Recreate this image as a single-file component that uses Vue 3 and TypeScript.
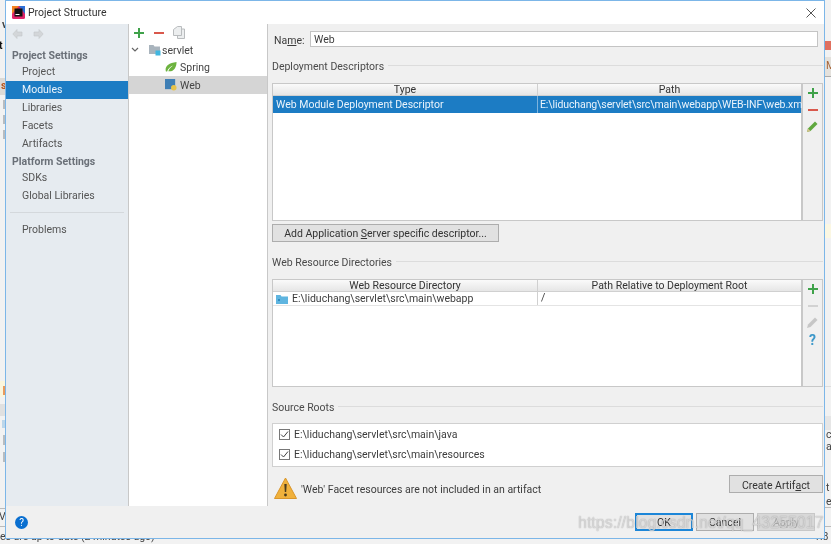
<script setup lang="ts">
const navTop = ['Project', 'Modules', 'Libraries', 'Facets', 'Artifacts']
const navBottom = ['SDKs', 'Global Libraries']
</script>

<template>
  <div class="desk">
    <div class="behind">
      <div class="bb b-tan-l"></div>
      <div class="bb b-sq s1"></div><div class="bb b-sq s2"></div><div class="bb b-sq s3"></div>
      <div class="bb b-yel"></div><div class="bb b-org"></div>
      <div class="bb b-gr1"></div><div class="bb b-blu"></div>
      <div class="bb b-sq s4"></div><div class="bb b-sq s5"></div>
      <div class="bb ln-l1"></div><div class="bb ln-l2"></div>
      <div class="bb redbar"></div>
      <div class="bb b-tan-r"></div>
      <div class="bb b-yel-r"></div>
      <div class="bb b-gr-r"></div>
      <div class="bb ln-r1"></div><div class="bb ln-r2"></div><div class="bb ln-r3"></div>
      <span class="frag f1">v</span><span class="frag f2">t</span><span class="frag f3">s</span>
      <span class="frag f4">V</span>
      <span class="frag status">es are up-to-date (2 minutes ago)</span>
      <span class="frag pos">1:8</span>
      <span class="frag rc r0">M</span>
      <span class="frag rc c1">c</span><span class="frag rc c2">a</span><span class="frag rc c3">t</span><span class="frag rc c4">e</span>
    </div>

    <div class="dialog">
      <header class="title">
        <svg class="appicon" width="13" height="13" viewBox="0 0 13 13">
          <rect width="13" height="13" rx="1.500" fill="#e0246a" />
          <path d="M0 0h7L0 8z" fill="#f58220" />
          <path d="M13 0v8L7 0z" fill="#2d6fd6" />
          <rect x="2.500" y="2.500" width="8" height="8" fill="#111" />
          <rect x="3.500" y="8" width="4" height="1" fill="#fff" />
        </svg>
        <span>Project Structure</span>
        <svg class="close" width="10" height="10" viewBox="0 0 10 10"><path d="M.5.5l9 9M9.500.5l-9 9" stroke="#555" fill="none" /></svg>
      </header>

      <div class="main">
        <aside class="side">
          <div class="arrows">
            <svg width="11" height="10" viewBox="0 0 11 10"><path d="M5 .5L.8 5 5 9.500V7h5V3H5z" fill="#d3d6d9" stroke="#c4c7ca" stroke-width=".6" /></svg>
            <svg width="11" height="10" viewBox="0 0 11 10"><path d="M6 .5L10.200 5 6 9.500V7H1V3h5z" fill="#d3d6d9" stroke="#c4c7ca" stroke-width=".6" /></svg>
          </div>
          <div class="group g1">Project Settings</div>
          <div v-for="n in navTop" :key="n" class="nav" :class="{ on: n === 'Modules' }">{{ n }}</div>
          <div class="group g2">Platform Settings</div>
          <div v-for="n in navBottom" :key="n" class="nav">{{ n }}</div>
          <div class="rule"></div>
          <div class="nav">Problems</div>
        </aside>

        <section class="tree">
          <div class="treebar">
            <svg width="12" height="12" viewBox="0 0 12 12"><path d="M6 1v10M1 6h10" stroke="#3fa24a" stroke-width="2" /></svg>
            <svg width="12" height="12" viewBox="0 0 12 12"><path d="M1 6h10" stroke="#d9584c" stroke-width="2" /></svg>
            <svg width="12" height="13" viewBox="0 0 12 13"><path d="M4.500 .5h4v9h-8V3.500z M8.500 3h3v9.500h-7V9.500" fill="#eceeef" stroke="#b9bcbe" /></svg>
          </div>
          <div class="node root">
            <svg width="8" height="6" viewBox="0 0 8 6"><path d="M1 1l3 3 3-3" stroke="#666" fill="none" stroke-width="1.200" /></svg>
            <svg class="ni" width="12" height="12" viewBox="0 0 12 12"><path d="M0 1h4.500l1 1.500H11V10H0z" fill="#a9b4bd" /><rect x="6.500" y="6.500" width="5" height="5" fill="#40b6e0" /></svg>
            <span>servlet</span>
          </div>
          <div class="node child">
            <svg class="ni" width="12" height="12" viewBox="0 0 13 12"><path d="M1 11C-.5 6 3 1.500 12.500.5 12.500 7 9 11.500 3.500 10.500 5 7 7.500 5.500 9 4.500 6 5.500 3.500 7.500 2.300 11z" fill="#6db33f" /></svg>
            <span>Spring</span>
          </div>
          <div class="node child sel">
            <svg class="ni" width="12" height="12" viewBox="0 0 13 13"><rect width="11" height="11" fill="#3f7fb5" /><circle cx="9.500" cy="9.500" r="3" fill="#e8c34a" /></svg>
            <span>Web</span>
          </div>
        </section>

        <section class="pane">
          <div class="namerow">
            <label>Na<u>m</u>e:</label>
            <div class="input">Web</div>
          </div>

          <div class="legend first"><span>Deployment Descriptors</span><i></i></div>
          <div class="tablewrap t1">
            <div class="tbl">
              <div class="thead"><div class="c-a">Type</div><div class="c-b">Path</div></div>
              <div class="row chosen"><div class="c-a">Web Module Deployment Descriptor</div><div class="c-b">E:\liduchang\servlet\src\main\webapp\WEB-INF\web.xml</div></div>
            </div>
            <div class="tools">
              <svg width="12" height="12" viewBox="0 0 12 12"><path d="M6 1v10M1 6h10" stroke="#3fa24a" stroke-width="2" /></svg>
              <svg width="12" height="12" viewBox="0 0 12 12"><path d="M1 6h10" stroke="#d9584c" stroke-width="2" /></svg>
              <svg width="11" height="11" viewBox="0 0 11 11"><path d="M0 11l1-3.500L8 .5 10.500 3 3.500 10z" fill="#5fa83f" /><path d="M0 11l1-3.500 2.500 2.500z" fill="#d7c08a" /></svg>
            </div>
          </div>
          <div class="addrow"><button class="btn add">Add Application <u>S</u>erver specific descriptor...</button></div>

          <div class="legend second"><span>Web Resource Directories</span><i></i></div>
          <div class="tablewrap t2">
            <div class="tbl">
              <div class="thead"><div class="c-a">Web Resource Directory</div><div class="c-b">Path Relative to Deployment Root</div></div>
              <div class="row plain">
                <div class="c-a">
                  <svg width="12" height="10" viewBox="0 0 12 10"><path d="M0 1h4.500l1 1.500H12V10H0z" fill="#5fb5e0" /><rect x="2" y="5" width="2" height="2" fill="#2f8cc0" /></svg>
                  <span>E:\liduchang\servlet\src\main\webapp</span>
                </div>
                <div class="c-b">/</div>
              </div>
            </div>
            <div class="tools">
              <svg width="12" height="12" viewBox="0 0 12 12"><path d="M6 1v10M1 6h10" stroke="#3fa24a" stroke-width="2" /></svg>
              <svg width="12" height="12" viewBox="0 0 12 12"><path d="M1 6h10" stroke="#c9c9c9" stroke-width="1.500" /></svg>
              <svg width="11" height="11" viewBox="0 0 11 11"><path d="M0 11l1-3.500L8 .5 10.500 3 3.500 10z" fill="#c6c6c6" /></svg>
              <span class="q">?</span>
            </div>
          </div>

          <div class="legend third"><span>Source Roots</span><i></i></div>
          <div class="roots">
            <div class="root-row">
              <span class="check"><svg width="9" height="9" viewBox="0 0 9 9"><path d="M1 4.500l2.500 2.500L8 1.500" stroke="#444" fill="none" /></svg></span>
              <span>E:\liduchang\servlet\src\main\java</span>
            </div>
            <div class="root-row">
              <span class="check"><svg width="9" height="9" viewBox="0 0 9 9"><path d="M1 4.500l2.500 2.500L8 1.500" stroke="#444" fill="none" /></svg></span>
              <span>E:\liduchang\servlet\src\main\resources</span>
            </div>
          </div>
          <div class="warnrow">
            <svg width="23" height="22" viewBox="0 0 23 22"><path d="M11.500 1L22.500 21.500H.5z" fill="#f0b13c" stroke="#d9952a" /><path d="M10.300 7h2.400l-.5 8h-1.400z" fill="#4a3a1c" /><circle cx="11.500" cy="18" r="1.400" fill="#4a3a1c" /></svg>
            <span class="warn">'Web' Facet resources are not included in an artifact</span>
            <button class="btn create">Create Artif<u>a</u>ct</button>
          </div>
        </section>
      </div>

      <footer class="foot">
        <span class="help">?</span>
        <div class="actions">
          <button class="btn dlg ok">OK</button>
          <button class="btn dlg">Cancel</button>
          <button class="btn dlg off">Apply</button>
        </div>
      </footer>
    </div>

    <div class="mark">https://blog.csdn.net/qq_43255017</div>
  </div>
</template>

<style>
html, body { margin: 0; background: #f2f2f2; overflow: hidden; }
</style>

<style scoped>
.desk {
  position: relative;
  width: 831px;
  height: 544px;
  overflow: hidden;
  background: #f2f2f2;
  font-family: Roboto, "Noto Sans", sans-serif;
  font-size: 10.500px;
  color: #3a3a3a;
  filter: blur(0.35px);
}
.bb { position: absolute; }
.b-tan-l { left: 0; top: 78px; width: 5px; height: 17px; background: #dcdad6; }
.b-sq { left: 3px; width: 2px; height: 9px; background: #b8bcc0; }
.s1 { top: 100px; } .s2 { top: 115px; } .s3 { top: 130px; }
.s4 { top: 435px; height: 10px; } .s5 { top: 452px; height: 10px; }
.b-yel { left: 0; top: 381px; width: 5px; height: 16px; background: #fbf6dc; }
.b-org { left: 3px; top: 386px; width: 2px; height: 9px; background: #e99a5c; }
.b-gr1 { left: 0; top: 404px; width: 5px; height: 12px; background: #e0e0e0; }
.b-blu { left: 2px; top: 420px; width: 3px; height: 8px; background: #bcd6ea; }
.ln-l1 { left: 0; top: 508px; width: 5px; height: 1px; background: #bbb; }
.ln-l2 { left: 0; top: 526px; width: 5px; height: 1px; background: #bbb; }
.redbar { left: 825px; top: 41px; width: 6px; height: 9px; background: #e0705f; }
.b-tan-r { left: 825px; top: 57px; width: 6px; height: 19px; background: #e4e1dc; border-bottom: 1px solid #aaa; }
.b-yel-r { left: 825px; top: 224px; width: 6px; height: 14px; background: #fbf7e2; }
.b-gr-r { left: 825px; top: 386px; width: 6px; height: 1px; background: #ddd; }
.ln-r1 { left: 825px; top: 416px; width: 6px; height: 14px; background: #e6e6e6; }
.ln-r2 { left: 825px; top: 507px; width: 6px; height: 1px; background: #bbb; }
.ln-r3 { left: 825px; top: 526px; width: 6px; height: 1px; background: #bbb; }
.frag { position: absolute; color: #444; }
.f1 { left: 2px; top: 18px; font-weight: 700; }
.f2 { left: -1px; top: 39px; font-weight: 700; color: #111; }
.f3 { left: 1px; top: 79px; font-weight: 700; color: #b5541c; }
.f4 { left: -1px; top: 510px; }
.status { left: 0; top: 530px; white-space: nowrap; }
.pos { left: 814px; top: 530px; }
.rc { left: 826px; }
.r0 { top: 59px; color: #a8663a; }
.c1 { top: 428px; } .c2 { top: 440px; } .c3 { top: 481px; } .c4 { top: 495px; }

.dialog {
  position: absolute;
  left: 5px;
  top: 0;
  width: 820px;
  height: 539px;
  box-sizing: border-box;
  border: 1px solid #7cb6e8;
  background: #f0f0f0;
  display: flex;
  flex-direction: column;
}
.title {
  height: 23px;
  flex: none;
  background: #fff;
  display: flex;
  align-items: center;
  padding-left: 6px;
  gap: 3px;
  font-size: 10.500px;
  color: #333;
}
.close { margin-left: auto; margin-right: 8px; }
.main { flex: 1; display: flex; min-height: 0; }
.side {
  width: 122px;
  flex: none;
  background: #e6ebf0;
  border-right: 1px solid #c8c8c8;
  color: #555;
}
.arrows { display: flex; gap: 10px; padding: 5px 6px 0; height: 14px; }
.group { font-weight: 700; color: #6a7078; height: 16px; line-height: 18px; padding-left: 6px; }
.g1 { margin-top: 4px; }
.g2 { height: 17px; margin-bottom: -1px; }
.nav { height: 18px; line-height: 17px; padding-left: 16px; }
.nav.on { background: #1c7cc4; color: #eaf3fb; }
.rule { height: 1px; background: #d4d8dc; margin: 7px 4px 8px; }
.tree { width: 138px; flex: none; background: #fff; color: #444; }
.treebar { display: flex; align-items: center; gap: 8px; height: 17px; padding: 0 4px 1px; }
.node { height: 18px; line-height: 17px; display: flex; align-items: center; gap: 3px; }
.root { height: 16px; padding-left: 2px; gap: 6px; }
.root .ni { margin-left: 4px; }
.root span { margin-left: -5px; }
.child { padding-left: 36px; }
.sel { background: #d5d5d5; }
.pane {
  flex: 1;
  min-width: 0;
  border-left: 1px solid #c8c8c8;
  padding: 7px 1px 0 4px;
  display: flex;
  flex-direction: column;
  color: #3c3c3c;
}
.namerow { display: flex; align-items: center; gap: 6px; height: 16px; padding-right: 5px; }
.namerow label { padding-left: 2px; padding-top: 2px; width: 30px; }
.input {
  flex: 1;
  height: 16px;
  line-height: 15px;
  box-sizing: border-box;
  border: 1px solid #c4c4c4;
  background: #fff;
  padding-left: 3px;
}
.legend { display: flex; align-items: center; gap: 4px; height: 16px; color: #4a4a4a; }
.legend span { padding-top: 2px; }
.legend i { flex: 1; height: 1px; background: #dcdcdc; }
.first { margin-top: 10px; }
.second { margin-top: 11px; }
.third { margin-top: 11px; }
.tablewrap { display: flex; }
.t1 { height: 138px; margin-top: 10px; }
.t2 { height: 108px; margin-top: 10px; }
.tbl {
  width: 531px;
  box-sizing: border-box;
  background: #fff;
  border: 1px solid #c8c8c8;
  border-right: 2px solid #c8c8c8;
}
.thead {
  display: flex;
  height: 12px;
  line-height: 11px;
  box-sizing: border-box;
  background: linear-gradient(#fafafa, #e6e6e6);
  border-bottom: 1px solid #d0d0d0;
  text-align: center;
  color: #333;
}
.c-a { width: 265px; flex: none; box-sizing: border-box; border-right: 1px solid #d0d0d0; }
.c-b { flex: 1; min-width: 0; white-space: nowrap; }
.row { display: flex; text-align: left; }
.chosen { height: 17px; line-height: 17px; background: #1c7cc4; color: #eaf3fb; }
.chosen .c-a { padding-left: 3px; border-right-color: #7db3dd; }
.chosen .c-b { padding-left: 2px; letter-spacing: -0.1px; }
.plain { height: 13px; line-height: 11px; border-bottom: 1px solid #e4e4e4; }
.plain .c-a { display: flex; align-items: center; gap: 4px; padding-left: 3px; }
.plain .c-b { padding-left: 3px; }
.tools {
  flex: 1;
  display: flex;
  flex-direction: column;
  align-items: center;
  gap: 5px;
  padding-top: 3px;
  background: #f0f0f0;
  border-top: 1px solid #c8c8c8;
  border-bottom: 1px solid #c8c8c8;
  border-right: 1px solid #c8c8c8;
}
.q { font-size: 14px; font-weight: 700; color: #3d98c9; line-height: 14px; }
.btn {
  font: inherit;
  color: #333;
  background: #e1e1e1;
  border: 1px solid #adadad;
  padding: 0;
  height: 18px;
  line-height: 15px;
}
.addrow { margin-top: 3px; }
.add { width: 227px; }
.roots {
  margin-top: 9px;
  height: 44px;
  box-sizing: border-box;
  background: #fff;
  border: 1px solid #d0d0d0;
  display: flex;
  flex-direction: column;
  gap: 6px;
  padding: 3px 0 0 6px;
}
.root-row { display: flex; align-items: center; gap: 4px; height: 14px; }
.check {
  width: 9px;
  height: 9px;
  border: 1px solid #777;
  background: #fff;
  display: flex;
  align-items: center;
  justify-content: center;
}
.warnrow { display: flex; align-items: flex-start; margin-top: 10px; padding-left: 2px; }
.warn { margin-left: 4px; margin-top: 6px; }
.create { margin-left: auto; width: 94px; margin-top: -2px; padding-top: 2px; }
.foot {
  height: 32px;
  flex: none;
  background: #f0f0f0;
  display: flex;
  align-items: center;
  padding: 0 9px 0 9px;
}
.help {
  width: 13px;
  height: 13px;
  border-radius: 50%;
  background: #0a6fd0;
  color: #fff;
  text-align: center;
  line-height: 13px;
  font-size: 10px;
}
.actions { margin-left: auto; display: flex; gap: 3px; }
.dlg { width: 58px; }
.ok { border: 2px solid #1c86d8; }
.off { color: #a8a8a8; background: #d8d8d8; border-color: #c8c8c8; }
.mark {
  position: absolute;
  left: 578px;
  top: 514px;
  font-family: "Liberation Sans", sans-serif;
  font-size: 16px;
  white-space: nowrap;
  color: rgba(255, 255, 255, 0.6);
  text-shadow: 0 0 1px rgba(80, 80, 80, 0.65);
}
</style>
